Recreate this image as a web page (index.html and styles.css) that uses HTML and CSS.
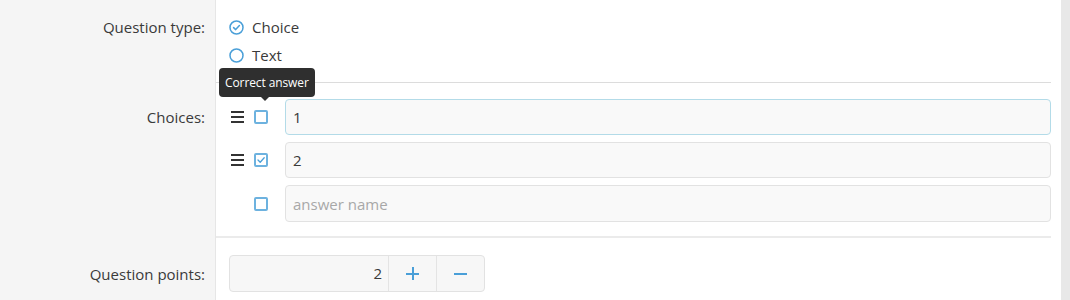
FILE: index.html
```html
<!DOCTYPE html>
<html>
<head>
<meta charset="utf-8">
<link rel="stylesheet" href="styles.css">
</head>
<body>
<div class="page">
  <div class="form">
    <div class="label label-type">Question type:</div>
    <div class="content content-type">
      <div class="radio">
        <svg class="radio-icon" width="15" height="15" viewBox="0 0 15 15"><circle cx="7.5" cy="7.5" r="6.5" fill="none" stroke="#4a9fd8" stroke-width="1.5"/><path d="M4.6 7.6 L6.7 9.6 L10.4 5.6" fill="none" stroke="#4a9fd8" stroke-width="1.5" stroke-linecap="round" stroke-linejoin="round"/></svg>
        <span>Choice</span>
      </div>
      <div class="radio">
        <svg class="radio-icon" width="15" height="15" viewBox="0 0 15 15"><circle cx="7.5" cy="7.5" r="6.5" fill="none" stroke="#4a9fd8" stroke-width="1.5"/></svg>
        <span>Text</span>
      </div>
    </div>

    <div class="label label-choices">Choices:</div>
    <div class="content content-choices">
      <div class="choice">
        <span class="handle"><i></i><i></i><i></i></span>
        <span class="check-wrap">
          <span class="check"></span>
          <span class="tooltip">Correct answer</span>
        </span>
        <div class="field focused">1</div>
      </div>
      <div class="choice">
        <span class="handle"><i></i><i></i><i></i></span>
        <span class="check-wrap">
          <span class="check checked"><svg width="10" height="10" viewBox="0 0 10 10"><path d="M2 5 L4.2 7.2 L8.2 2.8" fill="none" stroke="#4a9fd8" stroke-width="1.3" stroke-linecap="round" stroke-linejoin="round"/></svg></span>
        </span>
        <div class="field">2</div>
      </div>
      <div class="choice">
        <span class="handle empty"></span>
        <span class="check-wrap">
          <span class="check"></span>
        </span>
        <div class="field placeholder">answer name</div>
      </div>
    </div>

    <div class="label label-points">Question points:</div>
    <div class="content content-points">
      <div class="number">
        <div class="number-value">2</div>
        <div class="number-btn plus"><span class="bar-h"></span><span class="bar-v"></span></div>
        <div class="number-btn minus"><span class="bar-h"></span></div>
      </div>
    </div>
  </div>
  <div class="scroll"></div>
</div>
</body>
</html>
```

FILE: styles.css
```css
html, body {
  margin: 0;
  padding: 0;
  height: 100%;
  background: #ffffff;
}
body {
  font-family: "Open Sans", "Noto Sans", sans-serif;
  font-size: 15px;
  color: #3a3a3a;
  overflow: hidden;
}
.page {
  display: flex;
  height: 300px;
}
.form {
  flex: 1;
  display: grid;
  grid-template-columns: 216px 1fr;
  grid-template-rows: 83px 155px 1fr;
}
.label {
  background: #f5f5f5;
  border-right: 1px solid #e6e6e6;
  text-align: right;
  padding-right: 10px;
  box-sizing: border-box;
  line-height: 20px;
  color: #3a3a3a;
}
.label-type { padding-top: 17px; }
.label-choices { padding-top: 24px; }
.label-points { padding-top: 26px; }
.content {
  margin-right: 10px;
  padding-left: 13px;
  box-sizing: border-box;
}
.content-type {
  border-bottom: 1px solid #dcdcdc;
  padding-top: 13px;
}
.content-choices {
  border-bottom: 2px solid #ebebeb;
  padding-top: 16px;
  display: flex;
  flex-direction: column;
  gap: 7px;
}
.content-points {
  padding-top: 17px;
}
.radio {
  display: flex;
  align-items: center;
  height: 28px;
  gap: 8px;
}
.radio-icon {
  display: block;
  margin-top: 1px;
}
.choice {
  display: flex;
  align-items: center;
  height: 36px;
}
.choice:last-child { height: 37px; }
.handle {
  width: 13px;
  margin-left: 2px;
  display: flex;
  flex-direction: column;
  gap: 3px;
}
.handle i {
  display: block;
  height: 2px;
  background: #333;
}
.handle.empty { height: 1px; }
.check-wrap {
  position: relative;
  margin-left: 10px;
  width: 14px;
  height: 14px;
}
.check {
  display: flex;
  align-items: center;
  justify-content: center;
  width: 14px;
  height: 14px;
  box-sizing: border-box;
  border: 2px solid #6db2df;
  border-radius: 2px;
  background: #fff;
}
.check svg { display: block; }
.tooltip {
  position: absolute;
  left: -35px;
  bottom: 27px;
  background: #2f2f2f;
  color: #fff;
  font-size: 12px;
  line-height: 29px;
  padding: 0 6px;
  border-radius: 4px;
  white-space: nowrap;
  letter-spacing: -0.1px;
}
.tooltip::after {
  content: "";
  position: absolute;
  left: 42px;
  bottom: -4px;
  border-left: 4px solid transparent;
  border-right: 4px solid transparent;
  border-top: 4px solid #2f2f2f;
}
.field {
  flex: 1;
  margin-left: 17px;
  height: 100%;
  box-sizing: border-box;
  border: 1px solid #e2e2e2;
  border-radius: 4px;
  background: #f9f9f9;
  padding-left: 7px;
  display: flex;
  align-items: center;
  color: #3a3a3a;
}
.field.focused {
  border-color: #b3dbe8;
}
.field.placeholder {
  color: #a8a8a8;
}
.number {
  display: flex;
  width: 256px;
  height: 37px;
  box-sizing: border-box;
  border: 1px solid #e2e2e2;
  border-radius: 4px;
  background: #f7f7f7;
}
.number-value {
  width: 159px;
  box-sizing: border-box;
  padding-right: 6px;
  text-align: right;
  line-height: 35px;
  border-right: 1px solid #e4e4e4;
}
.number-btn {
  flex: 1;
  position: relative;
  display: flex;
  align-items: center;
  justify-content: center;
}
.plus { border-right: 1px solid #e4e4e4; }
.bar-h {
  display: block;
  width: 13px;
  height: 2px;
  background: #4a9fd8;
}
.bar-v {
  position: absolute;
  left: 50%;
  top: 50%;
  width: 2px;
  height: 13px;
  margin-left: -1px;
  margin-top: -6.5px;
  background: #4a9fd8;
}
.scroll {
  width: 9px;
  background: #e8e8e8;
}
```
